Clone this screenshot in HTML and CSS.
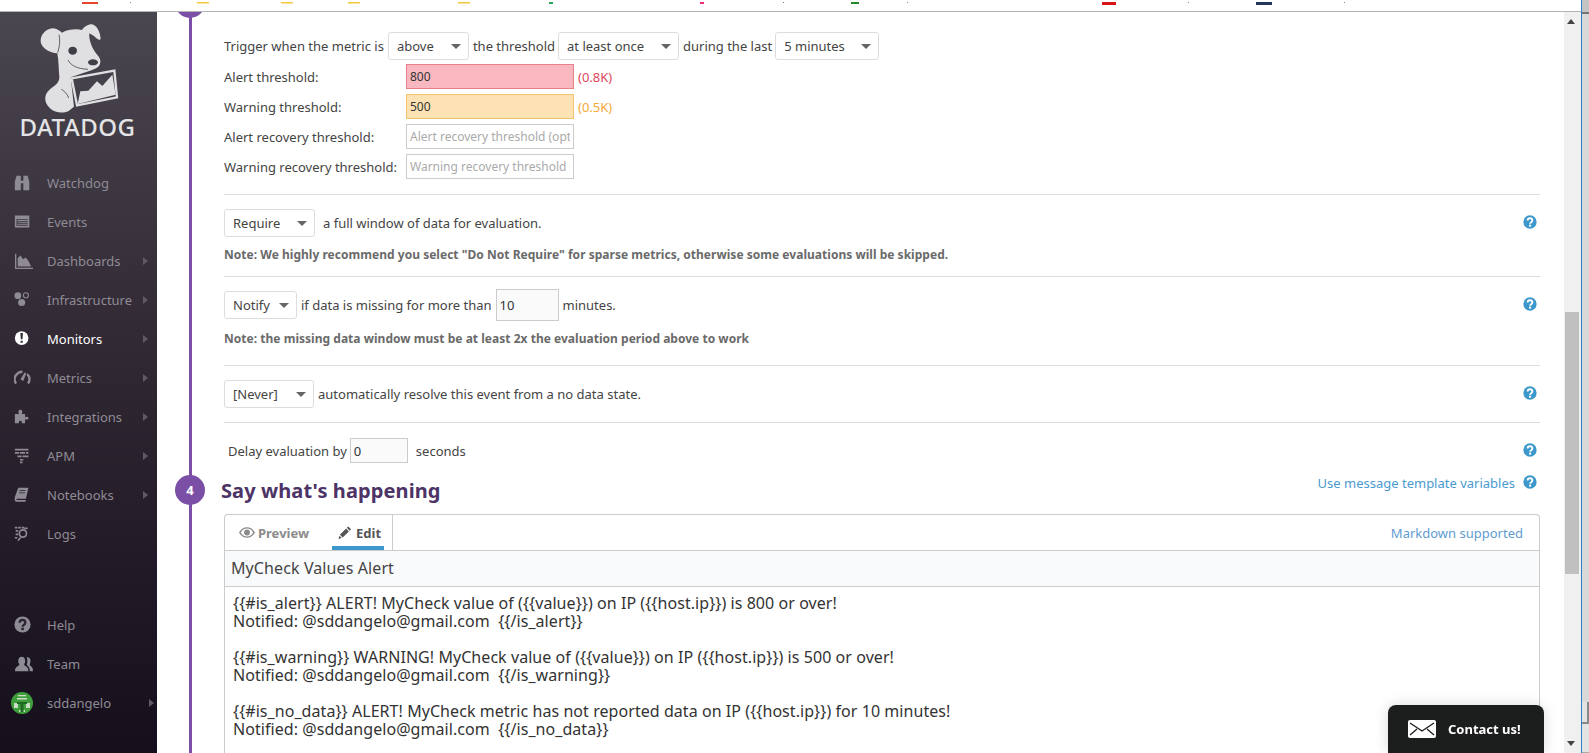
FILE: index.html
```html
<!DOCTYPE html>
<html lang="en">
<head>
    <meta charset="UTF-8">
    <title>Datadog - Edit Monitor</title>
    <link rel="stylesheet" href="styles.css">
</head>
<body>
    <svg class="sprite" width="0" height="0">
        <symbol id="i-help" viewBox="0 0 20 20">
            <circle cx="10" cy="10" r="9.5" fill="currentColor"/>
            <path d="M6.6 8a3.4 3.4 0 0 1 6.8 0c0 2.2-3.3 2.400-3.300 4.600" fill="none" stroke="var(--mark)" stroke-width="2.6"/>
            <rect x="8.6" y="13.8" width="3" height="2.8" fill="var(--mark)"/>
        </symbol>
    </svg>

    <div class="app">
        <div class="tabstrip">
            <svg width="1581" height="3" viewBox="0 0 1581 3">
                <rect x="82" width="16" height="2" fill="#e8472f"/>
                <rect x="130" width="1" height="1" fill="#7a8aa0"/>
                <rect x="197" width="12" height="1.5" fill="#f2c83c"/>
                <rect x="281" width="12" height="1.5" fill="#f2c83c"/>
                <rect x="348" width="12" height="1.5" fill="#f2c83c"/>
                <rect x="458" width="12" height="1.5" fill="#f2c83c"/>
                <rect x="549" width="4" height="2" fill="#25a55a"/>
                <rect x="700" width="4" height="2" fill="#ee2a78"/>
                <rect x="783" width="1" height="1" fill="#8a6a9a"/>
                <rect x="851" width="8" height="2" fill="#1f8a2c"/>
                <rect x="907" width="1" height="1" fill="#7a8aa0"/>
                <rect x="1102" width="14" height="3" fill="#d9131a"/>
                <rect x="1188" width="1" height="1" fill="#7a8aa0"/>
                <rect x="1256" width="16" height="3" fill="#23375c"/>
                <rect x="1344" width="1" height="1" fill="#7a8aa0"/>
            </svg>
        </div>

        <div class="layout">
            <aside class="sidebar">
                <div class="logo">
                    <svg class="dog" width="160" height="102" viewBox="0 36 480 306">
                        <path fill="#e0e0e2" d="M122 120C124 100 140 86 160 85C170 85 178 92 186 98C205 88 228 86 246 90C252 80 266 72 276 73C292 76 302 100 302 118C298 122 290 116 282 108L268 100C266 115 274 142 288 160C298 172 304 180 300 192C296 204 282 208 270 212L212 232L222 320L205 334C190 340 165 340 150 325C132 308 130 285 150 268C165 255 178 250 178 232C176 205 176 180 172 160C160 158 146 156 135 146C126 138 121 130 122 120Z"/>
                        <path fill="none" stroke="#4a4650" stroke-width="2.500" d="M177 104c4 16 2 36-4 54M204 180c8 16 26 26 60 28M184 268c10 6 18 14 22 26"/>
                        <ellipse cx="218" cy="152" rx="13" ry="12" fill="#413d47"/>
                        <ellipse cx="279" cy="187" rx="15" ry="9" fill="#413d47"/>
                        <path fill="#45414b" stroke="#e0e0e2" stroke-width="7" d="M215 235l128-23 8 80-120 24z"/>
                        <path fill="#e0e0e2" d="M233 312l8-38 24-2 26-28 16 14 30-34 10 60z"/>
                    </svg>
                    <div class="wordmark">DATADOG</div>
                </div>

                <nav class="nav">
                    <a class="nav-item">
                        <svg class="nav-icon" viewBox="0 0 20 20"><path d="M1 19V9l2-7h5v6h3V2h5l2 7v10h-7v-8H8v8z"/></svg>
                        <span>Watchdog</span>
                    </a>
                    <a class="nav-item">
                        <svg class="nav-icon" viewBox="0 0 20 20"><path fill-rule="evenodd" d="M1 3h17v14H1zm2 4v8h13V7z"/><path d="M4 8h12v1.300H4zM4 10.300h12v1.300H4zM4 12.600h12v1.300H4z"/></svg>
                        <span>Events</span>
                    </a>
                    <a class="nav-item">
                        <svg class="nav-icon wide" viewBox="0 0 20 20"><path d="M0 2h1.500v15.500H20V19H0z"/><path d="M3 16V7l3-3 3 4 3-2 3 4 3 6z"/></svg>
                        <span>Dashboards</span><i class="caret"></i>
                    </a>
                    <a class="nav-item">
                        <svg class="nav-icon" viewBox="0 0 20 20"><circle cx="4.500" cy="5.500" r="4"/><circle cx="14" cy="5" r="3" fill="none" stroke="currentColor" stroke-width="1.300"/><circle cx="9" cy="13.500" r="4.200"/></svg>
                        <span>Infrastructure</span><i class="caret"></i>
                    </a>
                    <a class="nav-item active">
                        <svg class="nav-icon" viewBox="0 0 20 20"><circle cx="9" cy="9.500" r="8"/><path fill="#322a35" d="M7.500 3.500h3l-.5 7.500H8zM7.700 12.500h2.600v2.500H7.700z"/></svg>
                        <span>Monitors</span><i class="caret"></i>
                    </a>
                    <a class="nav-item">
                        <svg class="nav-icon" viewBox="0 0 20 20"><path fill="none" stroke="currentColor" stroke-width="2.800" d="M2.500 17A7.800 7.800 0 0 1 4 5.500a8 8 0 0 1 6-2.300M15.500 6a8 8 0 0 1 1 11"/><path d="M12.500 4l2 1-3.500 9-3.500-2z"/></svg>
                        <span>Metrics</span><i class="caret"></i>
                    </a>
                    <a class="nav-item">
                        <svg class="nav-icon" viewBox="0 0 20 20"><path d="M1 7h5c-1.500-2-1-5 1.500-5S10.500 5 9 7h4v4c1-1 4-1 4 1s-3 2-4 1v5H9c1-1.500 0-3-1.500-3S5 16.500 6 18H1z"/></svg>
                        <span>Integrations</span><i class="caret"></i>
                    </a>
                    <a class="nav-item">
                        <svg class="nav-icon" viewBox="0 0 20 20"><path d="M1 2h16v2H1zM1 6h5v2H1zM7 6h6v2H7zM14 6h3v2h-3zM4 10h5v2H4zM10 10h7v2h-7zM7 14h4v2H7zM7 17h3v2H7z"/></svg>
                        <span>APM</span><i class="caret"></i>
                    </a>
                    <a class="nav-item">
                        <svg class="nav-icon" viewBox="0 0 20 20"><path d="M5 2h12l-3 13H3.500c-.8 0-1 1.500 0 1.500H14l-.5 2H3C.5 18.500.5 15 1 13z"/><path fill="#241c29" d="M6.500 5h7v1h-7zM6 7.500h7v1H6z"/></svg>
                        <span>Notebooks</span><i class="caret"></i>
                    </a>
                    <a class="nav-item">
                        <svg class="nav-icon" viewBox="0 0 20 20"><path d="M1 2h3v2H1zM5 2h3v2H5zM9 2h3v2H9zM2 6h3v2H2zM2 10h3v2H2zM1 14h3v2H1z"/><circle cx="10.500" cy="10" r="4.200" fill="none" stroke="currentColor" stroke-width="2"/><path d="M7 14l1.500 1.500L5 19l-1-1zM12 3h4v2h-4z"/></svg>
                        <span>Logs</span>
                    </a>
                </nav>

                <nav class="nav nav-bottom">
                    <a class="nav-item">
                        <svg class="nav-icon help-mark" viewBox="0 0 20 20"><use href="#i-help"/></svg>
                        <span>Help</span>
                    </a>
                    <a class="nav-item">
                        <svg class="nav-icon wide" viewBox="0 0 20 20"><path d="M0 18c0-4 2-5 4-6 1-1 1-2 0-3-1-3 0-7 3.500-7S12 6 11 9c-1 1-1 2 0 3 2 1 4 2 4 6z"/><path d="M13 2.500c3-.5 5 2 4 6-.5 1.500-1 2.500 0 3.500 1.500 1 3 2 3 6h-3.500c0-3-1-5-3.500-7 1-3 1-6 0-8.500z"/></svg>
                        <span>Team</span>
                    </a>
                    <a class="nav-item user">
                        <svg class="avatar" viewBox="0 0 22 22">
                            <circle cx="11" cy="11" r="11" fill="#3f9f3c"/>
                            <path fill="#c9dcc6" d="M7 3h8v1.200H7zM6 6h10v1.500H6zM3 11h4v5H3zM15 11h4v5h-4zM8 18h6v2H8z"/>
                            <path fill="#1f6a22" d="M6 10h10v2H6zM9.500 12h3v8h-3z"/>
                        </svg>
                        <span>sddangelo</span><i class="caret"></i>
                    </a>
                </nav>
            </aside>

            <main class="main">
                <div class="timeline">
                    <span class="step step-prev"></span>

                    <div class="row row-trigger">
                        <span>Trigger when the metric is</span>
                        <div class="select w-above">above</div>
                        <span>the threshold</span>
                        <div class="select w-once">at least once</div>
                        <span>during the last</span>
                        <div class="select w-five">5 minutes</div>
                    </div>

                    <div class="threshold">
                        <label>Alert threshold:</label>
                        <input class="alert" type="text" value="800">
                        <span class="alert-text">(0.8K)</span>
                    </div>
                    <div class="threshold">
                        <label>Warning threshold:</label>
                        <input class="warn" type="text" value="500">
                        <span class="warn-text">(0.5K)</span>
                    </div>
                    <div class="threshold">
                        <label>Alert recovery threshold:</label>
                        <input type="text" placeholder="Alert recovery threshold (optional)">
                    </div>
                    <div class="threshold">
                        <label>Warning recovery threshold:</label>
                        <input type="text" placeholder="Warning recovery threshold (optional)">
                    </div>

                    <div class="section section-require">
                        <div class="row">
                            <div class="select w-require">Require</div>
                            <span class="gap-left">a full window of data for evaluation.</span>
                            <svg class="help"><use href="#i-help"/></svg>
                        </div>
                        <p class="note">Note: We highly recommend you select "Do Not Require" for sparse metrics, otherwise some evaluations will be skipped.</p>
                    </div>

                    <div class="section section-notify">
                        <div class="row">
                            <div class="select w-notify">Notify</div>
                            <span>if data is missing for more than</span>
                            <input class="num w-ten" type="text" value="10">
                            <span>minutes.</span>
                            <svg class="help"><use href="#i-help"/></svg>
                        </div>
                        <p class="note">Note: the missing data window must be at least 2x the evaluation period above to work</p>
                    </div>

                    <div class="section section-never">
                        <div class="row">
                            <div class="select w-never">[Never]</div>
                            <span>automatically resolve this event from a no data state.</span>
                            <svg class="help"><use href="#i-help"/></svg>
                        </div>
                    </div>

                    <div class="section section-delay">
                        <div class="row">
                            <span class="delay-label">Delay evaluation by</span>
                            <input class="num w-zero" type="text" value="0">
                            <span class="gap-left">seconds</span>
                            <svg class="help"><use href="#i-help"/></svg>
                        </div>
                    </div>

                    <div class="heading">
                        <span class="step">4</span>
                        <h2>Say what's happening</h2>
                        <a class="template-link">Use message template variables</a>
                        <svg class="help"><use href="#i-help"/></svg>
                    </div>

                    <div class="editor">
                        <div class="editor-tabs">
                            <div class="tabs">
                                <a class="tab">
                                    <svg class="tab-icon" viewBox="0 0 18 14"><path fill-rule="evenodd" d="M0 7c2-4 5.500-6 9-6s7 2 9 6c-2 4-5.500 6-9 6S2 11 0 7zm2 0c1.500 2.800 4 4.400 7 4.400s5.500-1.600 7-4.400c-1.500-2.800-4-4.400-7-4.400S3.500 4.200 2 7z"/><circle cx="9" cy="7" r="3.300"/></svg>
                                    Preview
                                </a>
                                <a class="tab tab-active">
                                    <svg class="tab-icon" viewBox="0 0 14 14"><path d="M10.500.5l3 3-1.500 1.500-3-3zM8.200 2.800l3 3L4.500 12.500l-3-3zM1 10.500l2.500 2.500L0 14z"/></svg>
                                    Edit
                                </a>
                            </div>
                            <a class="markdown">Markdown supported</a>
                        </div>
                        <div class="editor-title">MyCheck Values Alert</div>
                        <div class="editor-body">{{#is_alert}} ALERT! MyCheck value of ({{value}}) on IP ({{host.ip}}) is 800 or over!
Notified: @sddangelo@gmail.com  {{/is_alert}}

{{#is_warning}} WARNING! MyCheck value of ({{value}}) on IP ({{host.ip}}) is 500 or over!
Notified: @sddangelo@gmail.com  {{/is_warning}}

{{#is_no_data}} ALERT! MyCheck metric has not reported data on IP ({{host.ip}}) for 10 minutes!
Notified: @sddangelo@gmail.com  {{/is_no_data}}</div>
                    </div>
                </div>
            </main>

            <div class="scrollbar">
                <i class="arrow-up"></i>
                <div class="thumb"></div>
                <i class="arrow-down"></i>
            </div>
        </div>
    </div>

    <div class="window-edge">
        <div class="edge-a"></div>
        <div class="edge-b"></div>
        <div class="edge-c"></div>
        <div class="edge-d"></div>
    </div>

    <div class="contact">
        <svg class="envelope" width="28" height="18" viewBox="0 0 28 18">
            <rect width="28" height="18" rx="2" fill="#fff"/>
            <path fill="none" stroke="#1c1d1d" stroke-width="1.300" d="M2 3l12 8 12-8M2 15l7-6M26 15l-7-6"/>
        </svg>
        <span>Contact us!</span>
    </div>
</body>
</html>
```

FILE: styles.css
```css
* {
    box-sizing: border-box;
}

html, body {
    margin: 0;
    height: 100%;
    overflow: hidden;
}

body {
    display: flex;
    font-family: "Noto Sans", "Open Sans", sans-serif;
    font-size: 13px;
    color: #444;
    background-color: #fff;
}

.sprite {
    position: absolute;
}

.app {
    display: flex;
    flex-direction: column;
    width: 1581px;
    height: 753px;
}

.tabstrip {
    height: 12px;
    flex: none;
    background-color: #fff;
    border-bottom: 1px solid #b4b4b4;
    line-height: 0;
}

.layout {
    display: flex;
    flex: 1;
    min-height: 0;
}

/* sidebar */
.sidebar {
    display: flex;
    flex-direction: column;
    width: 157px;
    flex: none;
    padding-bottom: 31px;
    background: linear-gradient(#4a4650, #2e2631 50%, #150f1c);
}

.logo {
    height: 151px;
    flex: none;
}

.dog {
    display: block;
}

.wordmark {
    margin-top: 2px;
    padding-right: 2px;
    text-align: center;
    font-size: 24px;
    line-height: 22px;
    font-weight: 500;
    letter-spacing: 0.5px;
    color: #e4e4e6;
}

.nav-bottom {
    margin-top: auto;
}

.nav-item {
    display: flex;
    align-items: center;
    position: relative;
    height: 39px;
    padding-left: 14px;
    color: #8f8b95;
}

.nav-item.active {
    color: #fff;
}

.nav-icon {
    width: 17px;
    height: 17px;
    margin-right: 16px;
    flex: none;
    fill: currentColor;
    --mark: #2b2430;
}

.nav-icon.wide {
    width: 20px;
    height: 18px;
    margin-right: 13px;
}

.caret {
    margin-left: auto;
    margin-right: 9px;
    border-left: 5px solid #5f5a66;
    border-top: 4px solid transparent;
    border-bottom: 4px solid transparent;
}

.user .avatar {
    width: 22px;
    height: 22px;
    margin-left: -3px;
    margin-right: 14px;
    flex: none;
}

.user .caret {
    margin-right: 3px;
}

/* main column */
.main {
    flex: 1;
    min-width: 0;
    padding: 0 24px 0 32px;
    overflow: hidden;
}

.timeline {
    position: relative;
    min-height: 100%;
    padding: 20px 0 0 32px;
    border-left: 3px solid #7b4fa6;
}

.step {
    position: absolute;
    left: -17px;
    width: 30px;
    height: 30px;
    border-radius: 50%;
    background-color: #7b4fa6;
    color: #fff;
    font-size: 13px;
    font-weight: 700;
    line-height: 30px;
    text-align: center;
}

.step-prev {
    top: -24px;
}

.row {
    display: flex;
    align-items: center;
    gap: 4px;
    white-space: nowrap;
}

.row-trigger {
    height: 28px;
    margin-bottom: 4px;
}

.select {
    display: flex;
    align-items: center;
    height: 28px;
    padding-left: 8px;
    flex: none;
    background-color: #fff;
    border: 1px solid #ddd;
    border-radius: 3px;
    color: #444;
}

.select::after {
    content: "";
    margin-left: auto;
    margin-right: 7px;
    border-top: 5px solid #666;
    border-left: 5px solid transparent;
    border-right: 5px solid transparent;
}

.w-above { width: 81px; }
.w-once { width: 121px; margin-left: -1px; }
.w-five { width: 104px; margin-left: -1px; }
.w-require { width: 91px; }
.w-notify { width: 73px; }
.w-never { width: 90px; }

.threshold {
    display: flex;
    align-items: center;
    height: 25px;
    margin-bottom: 5px;
}

.threshold label {
    width: 182px;
    flex: none;
}

.threshold input {
    width: 168px;
    height: 25px;
    padding: 0 3px;
    background-color: #fff;
    border: 1px solid #ccc;
    font: inherit;
    font-size: 12px;
    color: #333;
}

.threshold input::placeholder {
    color: #aaa;
}

.threshold input.alert {
    background-color: #f9b8bf;
    border-color: #e8808b;
}

.threshold input.warn {
    background-color: #fde3b3;
    border-color: #f3c26f;
}

.threshold span {
    margin-left: 4px;
}

.alert-text {
    color: #e0485c;
}

.warn-text {
    color: #f5a936;
}

.section {
    padding-top: 14px;
    border-top: 1px solid #ddd;
}

.section-require {
    margin-top: 15px;
}

.section-notify {
    margin-top: 13px;
    padding-top: 12px;
}

.section-never {
    margin-top: 18px;
    padding-top: 14px;
}

.section-delay {
    margin-top: 14px;
    padding-top: 15px;
}

.gap-left {
    margin-left: 4px;
}

.note {
    margin: 10px 0 0;
    font-size: 12px;
    line-height: 16px;
    font-weight: 700;
    letter-spacing: 0.024px;
    color: #6a6a6a;
}

.num {
    height: 32px;
    padding: 0 3px;
    background-color: #fafafa;
    border: 1px solid #ccc;
    font: inherit;
    color: #333;
}

.w-ten { width: 63px; }

.w-zero {
    width: 58px;
    height: 25px;
}

.delay-label {
    margin-left: 4px;
    margin-right: -1px;
}

.help {
    width: 14px;
    height: 14px;
    margin-left: auto;
    margin-right: 3px;
    margin-bottom: 2px;
    flex: none;
    color: #3c97cb;
    --mark: #fff;
}

.heading {
    display: flex;
    align-items: center;
    position: relative;
    height: 28px;
    margin: 13px 0 10px -3px;
}

.heading .step {
    left: -46px;
    top: -1px;
}

.heading h2 {
    margin: 0;
    font-size: 20px;
    font-weight: 700;
    letter-spacing: 0.1px;
    color: #4d3366;
}

.template-link {
    margin-left: auto;
    margin-right: 8px;
    margin-bottom: 14px;
    color: #4a9bd0;
}

.heading .help {
    margin: 0 3px 16px 0;
}

.editor {
    border: 1px solid #ccc;
    border-radius: 4px 4px 0 0;
    border-bottom: 0;
}

.editor-tabs {
    display: flex;
    align-items: center;
    height: 36px;
    border-bottom: 1px solid #ccc;
}

.tabs {
    display: flex;
    align-self: stretch;
    width: 168px;
    padding-left: 14px;
    gap: 23px;
    border-right: 1px solid #ccc;
}

.tab {
    display: flex;
    align-items: center;
    gap: 3px;
    height: 35px;
    padding-top: 4px;
    border-bottom: 4px solid transparent;
    font-weight: 700;
    font-size: 13px;
    color: #8b8b8b;
}

.tab-active {
    padding-left: 5px;
    padding-right: 3px;
    color: #555;
    border-bottom-color: #3c97cb;
}

.tab-icon {
    width: 16px;
    height: 13px;
    fill: currentColor;
}

.markdown {
    margin-left: auto;
    margin-right: 16px;
    color: #5f9ccf;
}

.editor-title {
    height: 36px;
    padding-left: 6px;
    background-color: #f9fafb;
    border-bottom: 1px solid #ccc;
    font-size: 16px;
    line-height: 34px;
    letter-spacing: 0.1px;
    color: #444;
}

.editor-body {
    padding: 7px 8px 40px;
    font-size: 16px;
    line-height: 18px;
    letter-spacing: 0.06px;
    white-space: pre-wrap;
    color: #333;
}

/* fake browser scrollbar */
.scrollbar {
    display: flex;
    flex-direction: column;
    align-items: flex-start;
    width: 17px;
    flex: none;
    padding-top: 7px;
    background-color: #f0f0f0;
}

.thumb {
    width: 14px;
    height: 262px;
    margin-top: 288px;
    margin-left: 1px;
    background-color: #c0c0c0;
}

.arrow-up,
.arrow-down {
    margin-left: 3px;
    border-left: 4px solid transparent;
    border-right: 4px solid transparent;
}

.arrow-up {
    border-bottom: 5px solid #444;
}

.arrow-down {
    margin-top: auto;
    margin-bottom: 7px;
    border-top: 5px solid #444;
}

.window-edge {
    display: flex;
    flex-direction: column;
    flex: 1;
    height: 753px;
    border-left: 1px solid #2f7fc4;
    background-color: #e3e3e3;
}

.edge-a {
    height: 12px;
    background-color: #c4c4c4;
}

.edge-b {
    height: 690px;
    background-color: #d9d9d9;
    border-top: 2px solid #777;
}

.edge-c {
    height: 22px;
    border-right: 2px solid #8a8a8a;
    border-bottom: 2px solid #8a8a8a;
}

.edge-d {
    flex: 1;
    border-bottom: 1px solid #aaa;
}

.contact {
    position: fixed;
    right: 45px;
    bottom: 0;
    display: flex;
    align-items: center;
    gap: 12px;
    width: 156px;
    height: 48px;
    padding-left: 20px;
    background-color: #1c1d1d;
    border-radius: 8px 8px 0 0;
    box-shadow: 0 0 14px rgba(0, 0, 0, 0.15);
    color: #fff;
    font-size: 13px;
    font-weight: 700;
}
```
